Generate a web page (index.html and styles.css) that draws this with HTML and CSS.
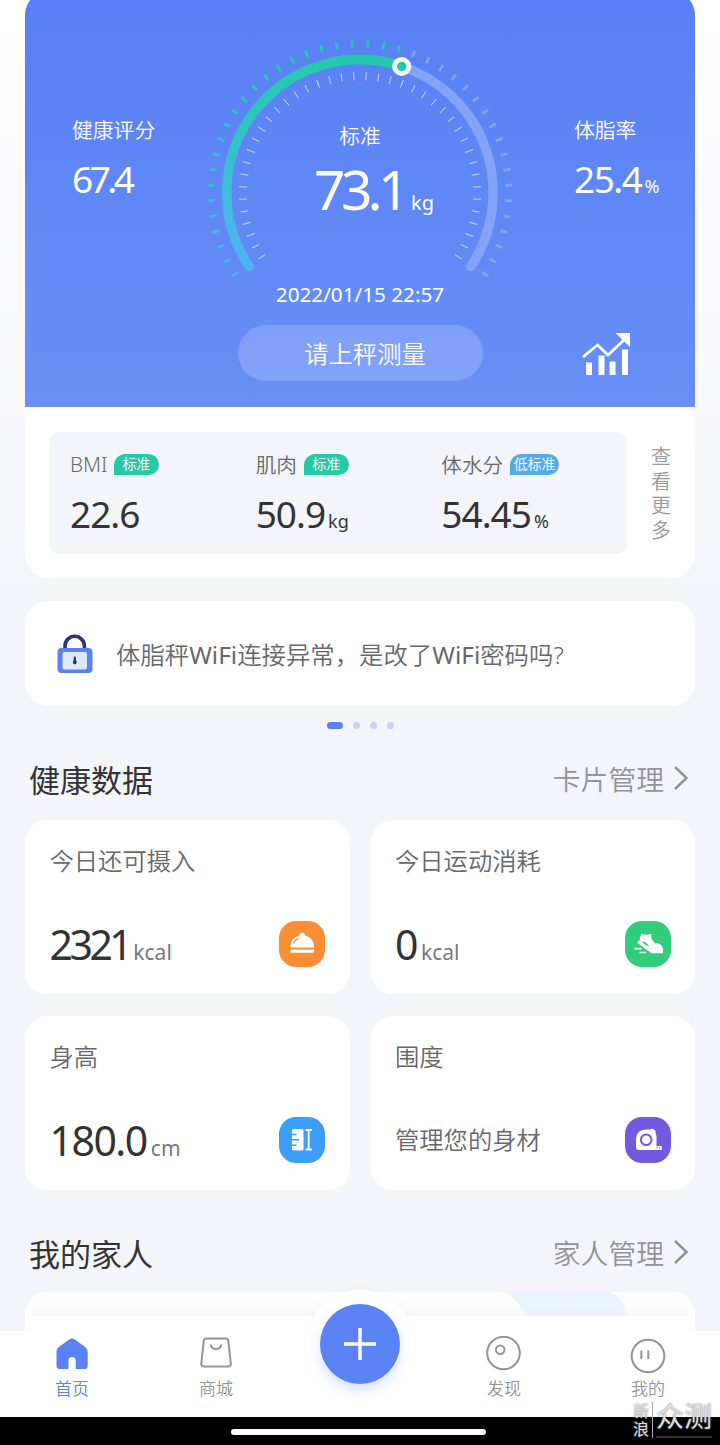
FILE: index.html
```
<!DOCTYPE html>
<html lang="zh-CN">
<head>
  <meta charset="UTF-8">
  <title>健康数据</title>
  <link rel="stylesheet" href="styles.css">
</head>
<body>
  <div class="page">
    <section class="summary">
      <div class="hero">
        <div class="side">
          <div class="side-label">健康评分</div>
          <div class="side-value score">67.4</div>
        </div>

        <div class="gauge">
          <svg class="dial" width="320" height="290" viewBox="200 0 320 290" fill="none">
            <defs>
              <linearGradient id="arc" gradientUnits="userSpaceOnUse" x1="0" y1="267" x2="0" y2="70">
                <stop offset="0" stop-color="#4fb2f8"/>
                <stop offset="1" stop-color="#25caae"/>
              </linearGradient>
            </defs>
            <!-- 外圈刻度 -->
            <path d="M235.8 275.35A149 149 0 0 1 399.95 49.45" pathLength="139.1" stroke="url(#arc)" stroke-width="7" stroke-dasharray="1.1 4.9"/>
            <path d="M412.06 53.4A149 149 0 0 1 484.2 275.35" pathLength="103.1" stroke="#fff" stroke-opacity=".25" stroke-width="7" stroke-dasharray="1.1 4.9"/>
            <!-- 内圈刻度 -->
            <path d="M262.15 257.15A117 117 0 1 1 457.85 257.15" pathLength="246.5" stroke="#fff" stroke-opacity=".65" stroke-width="8" stroke-dasharray=".5 5.5"/>
            <!-- 进度 -->
            <path d="M401.5 66.3A133 133 0 0 1 470.8 266.5" stroke="#84a2f8" stroke-width="9.6" stroke-linecap="round"/>
            <path d="M249.2 266.5A133 133 0 0 1 401.5 66.3" stroke="url(#arc)" stroke-width="9.6" stroke-linecap="round"/>
            <circle cx="401.7" cy="66.4" r="9.5" fill="#fff"/>
            <circle cx="401.7" cy="66.4" r="4.7" fill="#25c8a8"/>
          </svg>
          <div class="reading">
            <div class="state">标准</div>
            <div class="weight">73.1<span>kg</span></div>
            <div class="time">2022/01/15 22:57</div>
            <div class="measure">请上秤测量</div>
          </div>
        </div>

        <div class="side side-right">
          <div class="side-label">体脂率</div>
          <div class="side-value fat">25.4<span>%</span></div>
          <svg class="trend" width="50" height="44" viewBox="0 0 50 44">
            <path d="M1 24L15.500 12L26 22L42.500 6.500" fill="none" stroke="#fff" stroke-width="2.800"/>
            <path d="M33.500 0H48V14Z" fill="#fff"/>
            <path d="M4 29.500h6v12.500H4zM16.500 22.500h6v19.500h-6zM27.500 28.500h6v13.500h-6zM40 16.500h6v25.500h-6z" fill="#fff"/>
          </svg>
        </div>
      </div>

      <div class="detail">
        <div class="metrics">
          <div class="metric">
            <div class="metric-name"><span class="bmi">BMI</span><span class="tag">标准</span></div>
            <div class="metric-value">22.6</div>
          </div>
          <div class="metric">
            <div class="metric-name">肌肉<span class="tag">标准</span></div>
            <div class="metric-value">50.9<span>kg</span></div>
          </div>
          <div class="metric">
            <div class="metric-name">体水分<span class="tag tag-low">低标准</span></div>
            <div class="metric-value">54.45<span>%</span></div>
          </div>
        </div>
        <div class="more">查看更多</div>
      </div>
    </section>

    <div class="tip">
      <svg width="36" height="40" viewBox="0 0 36 40">
        <path d="M8 16V12a9.700 9.700 0 0 1 19.400 0V16" fill="none" stroke="#2a3a70" stroke-width="3.600"/>
        <rect x="0.500" y="14" width="35" height="25" rx="4" fill="#5b82ea"/>
        <rect x="5.500" y="18" width="24.500" height="17.500" rx="2" fill="#dfe7fb"/>
        <path d="M17 22.500h1.600l.6 4.500a1.900 1.900 0 1 1-2.800 0z" fill="#24336a"/>
      </svg>
      <div class="tip-text">体脂秤<span>WiFi</span>连接异常，是改了<span>WiFi</span>密码吗?</div>
    </div>

    <div class="dots"><i class="on"></i><i></i><i></i><i></i></div>

    <div class="heading">
      <h2>健康数据</h2>
      <div class="manage">卡片管理
        <svg width="16" height="26" viewBox="0 0 16 26"><path d="M2 2L13.500 13L2 24" fill="none" stroke="#929397" stroke-width="2.500"/></svg>
      </div>
    </div>

    <div class="cards">
      <div class="card">
        <div class="card-title">今日还可摄入</div>
        <div class="card-row">
          <div class="card-value intake">2321<span>kcal</span></div>
          <svg class="icon" width="46" height="46" viewBox="0 0 46 46">
            <rect width="46" height="46" rx="17" fill="#fb8e34"/>
            <path d="M11.500 26.500C11.500 19 15.500 15.300 20.500 14.500C20.500 10.500 26 10.500 26 14.500C31 15.500 35 19 35 26.500Z" fill="#fff"/>
            <path d="M14.500 22.500C15.200 20 17 18.200 19.500 17.300" fill="none" stroke="#fb8e34" stroke-width="1.300"/>
            <rect x="11.500" y="28.500" width="23.500" height="3.200" rx="1" fill="#fff"/>
          </svg>
        </div>
      </div>
      <div class="card">
        <div class="card-title">今日运动消耗</div>
        <div class="card-row">
          <div class="card-value">0<span>kcal</span></div>
          <svg class="icon" width="46" height="46" viewBox="0 0 46 46">
            <rect width="46" height="46" rx="17" fill="#31cd7a"/>
            <path d="M16.300 12.800Q21 14.500 26.300 13L26.500 18L30 22.500C35 21.500 38 25 38 29V32.300H26.500L12.500 22Q12 20.500 14.500 19Z" fill="#fff"/>
            <path d="M17 20.800C20 20.300 22.500 22 24 25.300C21.500 25 19 23 17 20.800Z" fill="#31cd7a"/>
            <path d="M9.500 27.700H16.500M14.500 31.500H21" stroke="#fff" stroke-width="1.700"/>
          </svg>
        </div>
      </div>
      <div class="card">
        <div class="card-title">身高</div>
        <div class="card-row">
          <div class="card-value height">180.0<span>cm</span></div>
          <svg class="icon" width="46" height="46" viewBox="0 0 46 46">
            <rect width="46" height="46" rx="17" fill="#3b9ef9"/>
            <rect x="13" y="12" width="11.500" height="21.500" rx="1.500" fill="#fff"/>
            <path d="M13 17.500h4.500M13 22.800h7M13 28.200h4.500" stroke="#3b9ef9" stroke-width="1.500"/>
            <path d="M26.500 13h6.500M29.700 13v19.500M26.500 32.500h6.500" stroke="#fff" stroke-width="1.800"/>
          </svg>
        </div>
      </div>
      <div class="card">
        <div class="card-title">围度</div>
        <div class="card-row">
          <div class="card-note">管理您的身材</div>
          <svg class="icon" width="46" height="46" viewBox="0 0 46 46">
            <rect width="46" height="46" rx="17" fill="#7259de"/>
            <path d="M14 33Q11 33 11 30V23C11 16 15 12.500 21 12.500H25L27 11.500L30.500 13.500V16L31.500 19V29H36.700V33Z" fill="#fff"/>
            <circle cx="21.200" cy="22.800" r="5.300" fill="none" stroke="#7259de" stroke-width="2"/>
            <path d="M32 30v1.200M34.500 30v1.200" stroke="#7259de"/>
          </svg>
        </div>
      </div>
    </div>

    <div class="heading heading-family">
      <h2>我的家人</h2>
      <div class="manage">家人管理
        <svg width="16" height="26" viewBox="0 0 16 26"><path d="M2 2L13.500 13L2 24" fill="none" stroke="#929397" stroke-width="2.500"/></svg>
      </div>
    </div>
    <div class="family">
      <svg width="120" height="24" viewBox="0 0 120 24"><path d="M0 0H104Q119 6 120 24H22Q12 10 0 0Z" fill="#e6f2fe" fill-opacity=".85"/></svg>
    </div>

    <nav class="tabbar">
      <div class="tab active">
        <svg width="36" height="36" viewBox="0 0 36 36"><path d="M15.500 3.300Q18 1.500 20.500 3.300L31.500 11.200Q33.700 13 33.700 15.500V30Q33.700 33 30.700 33H21.700V24.500Q21.700 21 18 21Q14.500 21 14.500 24.500V33H5.500Q2.500 33 2.500 30V15.500Q2.500 13 4.500 11.200Z" fill="#5b82f5"/></svg>
        <span>首页</span>
      </div>
      <div class="tab">
        <svg width="36" height="36" viewBox="0 0 36 36" fill="none" stroke="#939393" stroke-width="2"><path d="M8.300 2.500H27.500Q30 2.500 30.300 5L32.800 27.500Q33 30.500 30 30.500H6Q3 30.500 3.300 27.500L5.700 5Q6 2.500 8.300 2.500Z"/><path d="M12.500 8.500C14 14.500 22 14.500 23.500 8.500"/></svg>
        <span>商城</span>
      </div>
      <div class="tab tab-add">
        <div class="bump">
          <div class="add">
            <svg width="34" height="34" viewBox="0 0 34 34"><path d="M17 1V33M1 17H33" stroke="#fff" stroke-width="3.400"/></svg>
          </div>
        </div>
      </div>
      <div class="tab">
        <svg width="36" height="36" viewBox="0 0 36 36" fill="none" stroke="#939393" stroke-width="2"><circle cx="17.500" cy="17" r="16.300"/><circle cx="14.200" cy="13.800" r="4.200"/></svg>
        <span>发现</span>
      </div>
      <div class="tab tab-me">
        <svg width="36" height="36" viewBox="0 0 36 36" fill="none" stroke="#939393" stroke-width="2"><circle cx="18" cy="18" r="16.300"/><path d="M11.300 12.500V21M18.300 12.500V21"/></svg>
        <span>我的</span>
      </div>
    </nav>
    <div class="system"><i></i></div>

    <div class="watermark">
      <div class="mark-small">新浪</div>
      <div class="mark-big">众测</div>
    </div>
  </div>
</body>
</html>
```
FILE: styles.css
```
* {
  box-sizing: border-box;
}

body {
  margin: 0;
  font-family: "Noto Sans", "Noto Sans CJK SC", sans-serif;
  font-weight: 350;
  color: #333;
}

svg {
  display: block;
  flex: none;
}

.page {
  position: relative;
  width: 720px;
  height: 1445px;
  overflow: hidden;
  padding: 0 25px;
  background: linear-gradient(#fff 0, #fbfbfd 180px, #f4f5fa 600px, #f4f5fa 1331px, #fff 1331px);
}

/* 体重 */
.summary {
  height: 587px;
  margin-top: -9px;
  background: #fff;
  border-radius: 24px;
}

.hero {
  display: flex;
  height: 416px;
  padding-top: 9px;
  background: linear-gradient(#5880f4, #688ff7);
  border-radius: 24px 24px 0 0;
  color: #fff;
}

.side {
  width: 150px;
  padding: 115px 0 0 47px;
  white-space: nowrap;
}

.side-right {
  width: 200px;
  padding-left: 79px;
}

.side-label {
  font-size: 20.800px;
  line-height: 30px;
}

.side-value,
.weight,
.metric-value,
.card-value {
  font-weight: 400;
}

.side-value {
  font-size: 37px;
  line-height: 44px;
  margin-top: 12px;
  letter-spacing: -1.500px;
}

.score {
  letter-spacing: -3.500px;
}

.side-value span {
  font-size: 18px;
  letter-spacing: 0;
  margin-left: 3px;
}

.trend {
  margin: 125px 0 0 8px;
}

.gauge {
  width: 320px;
  display: grid;
}

.dial,
.reading {
  grid-area: 1 / 1;
}

.dial {
  margin-left: 25px;
}

.reading {
  width: 370px;
  padding-top: 121px;
  text-align: center;
}

.state {
  font-size: 20.800px;
  line-height: 30px;
}

.weight {
  font-size: 55px;
  line-height: 70px;
  margin-top: 3px;
  padding-left: 28px;
  letter-spacing: -4.500px;
}

.weight span {
  font-size: 20px;
  letter-spacing: 0;
  margin-left: 6px;
}

.time {
  font-size: 20.700px;
  font-weight: 400;
  line-height: 30px;
  margin-top: 41px;
}

.measure {
  width: 245px;
  height: 56px;
  margin: 16px auto 0;
  padding-left: 10px;
  border-radius: 28px;
  background: rgba(255, 255, 255, .18);
  font-size: 24.300px;
  line-height: 57px;
}

.detail {
  display: flex;
  padding: 25px 0 0 24px;
}

.metrics {
  display: flex;
  width: 578px;
  height: 122px;
  padding: 17px 0 0 21px;
  border-radius: 10px;
  background: #f4f5fa;
}

.metric {
  width: 186px;
}

.metric-name {
  display: flex;
  align-items: center;
  height: 30px;
  font-size: 20.600px;
  color: #66676b;
}

.bmi {
  width: 37px;
}

.tag {
  width: 45px;
  height: 21px;
  margin-left: 7px;
  border-radius: 12px 11px 11px 0;
  background: #26c9a5;
  color: #fff;
  font-size: 14px;
  line-height: 20px;
  text-align: center;
}

.tag-low {
  width: 49px;
  background: #55aaec;
}

.metric-value {
  font-size: 37px;
  line-height: 44px;
  margin-top: 13px;
  letter-spacing: -1px;
}

.metric-value span {
  font-size: 18px;
  letter-spacing: 0;
  margin-left: 3px;
}

.more {
  width: 20px;
  margin: 13px 0 0 24px;
  font-size: 20px;
  line-height: 24.500px;
  color: #999;
}

/* 提示 */
.tip {
  display: flex;
  align-items: center;
  height: 105px;
  margin-top: 23px;
  padding-left: 32px;
  border-radius: 24px;
  background: #fff;
}

.tip-text {
  margin-left: 23px;
  font-size: 24.400px;
  color: #66676b;
}

.tip-text span {
  font-weight: 400;
}

.dots {
  display: flex;
  justify-content: center;
  gap: 10px;
  margin-top: 16px;
}

.dots i {
  width: 7px;
  height: 7px;
  border-radius: 4px;
  background: #c5d1f5;
}

.dots .on {
  width: 16px;
  background: #5b82ea;
}

.heading {
  display: flex;
  align-items: center;
  justify-content: space-between;
  height: 50px;
  margin-top: 24px;
  padding: 0 6px 0 4px;
}

.heading h2 {
  margin: 0;
  font-size: 31px;
  font-weight: 400;
}

.manage {
  display: flex;
  align-items: center;
  gap: 9px;
  font-size: 27.800px;
  color: #929397;
}

/* 卡片 */
.cards {
  display: grid;
  grid-template-columns: 1fr 1fr;
  gap: 22px 21px;
  margin-top: 17px;
}

.card {
  height: 174px;
  padding: 23px 24.500px 0;
  border-radius: 22px;
  background: #fff;
}

.card-title,
.card-note {
  font-size: 24.300px;
  line-height: 36px;
  color: #66676b;
}

.card-row {
  display: flex;
  align-items: center;
  justify-content: space-between;
  height: 60px;
  margin-top: 35px;
}

.card-value {
  font-size: 41px;
  letter-spacing: -1.500px;
}

.card-value span {
  font-size: 21px;
  letter-spacing: 0;
  margin-left: 4px;
  color: #77787b;
}

.intake {
  letter-spacing: -3.500px;
}

.heading-family {
  margin-top: 37px;
}

.family {
  height: 60px;
  margin-top: 15px;
  padding-left: 481px;
  border-radius: 22px 22px 0 0;
  background: linear-gradient(#fff 8px, #f7f7f7 24px) center top / 656px 24px no-repeat, #fff;
}

/* 底部导航 */
.tabbar {
  position: absolute;
  left: 0;
  top: 1316px;
  display: flex;
  width: 720px;
  height: 101px;
  background: linear-gradient(transparent 15px, #fff 15px);
}

.tab {
  display: flex;
  flex: 1;
  flex-direction: column;
  align-items: center;
  padding-top: 20px;
  color: #939393;
}

.tab span {
  margin-top: 5px;
  font-size: 17px;
  line-height: 24px;
}

.active {
  color: #5b82e0;
}

.tab-me svg {
  margin: 2px 0 -2px;
}

.tab-add {
  padding-top: 0;
}

.bump {
  width: 108px;
  height: 108px;
  margin-top: -26px;
  padding: 14px;
  border-radius: 50%;
  background: #fff;
  box-shadow: 0 -3px 8px rgba(0, 0, 0, .02);
}

.add {
  display: flex;
  align-items: center;
  justify-content: center;
  width: 80px;
  height: 80px;
  border-radius: 50%;
  background: #5b82f5;
  box-shadow: 0 6px 12px rgba(91, 130, 245, .25);
}

.system {
  position: absolute;
  left: 0;
  top: 1417px;
  width: 720px;
  height: 28px;
  background: #000;
}

.system i {
  display: block;
  width: 255px;
  height: 6px;
  margin: 12px 0 0 231px;
  border-radius: 3px;
  background: #fff;
}

.watermark {
  position: absolute;
  right: 8px;
  bottom: 7px;
  display: flex;
  color: #ddd;
  font-weight: 400;
  text-shadow: 0 0 2px #777;
}

.mark-small {
  width: 20px;
  padding-right: 1px;
  border-right: 1px solid #aaa;
  font-size: 16px;
  line-height: 18px;
}

.mark-big {
  margin-left: 3px;
  font-size: 28px;
  line-height: 28px;
  border-bottom: 2px solid #333;
}
```
